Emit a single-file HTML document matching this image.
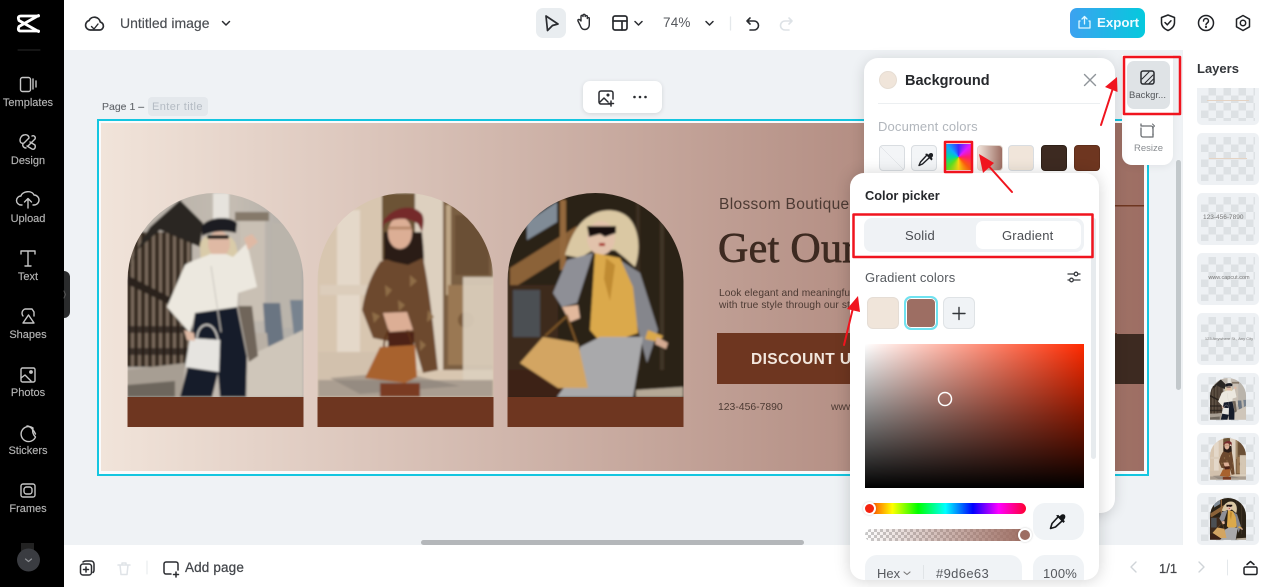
<!DOCTYPE html>
<html lang="en"><head><meta charset="utf-8"><title>Untitled image</title>
<style>
*{box-sizing:border-box}
html,body{margin:0;padding:0;width:1269px;height:587px;overflow:hidden;background:#eff2f5;font-family:"Liberation Sans",sans-serif;color:#3c3f44}
.a{position:absolute}
.t{position:absolute;white-space:nowrap;line-height:1}
svg{position:absolute;left:0;top:0;overflow:visible}
.side{position:absolute;width:56px;left:0;text-align:center;color:#b4b4b4;font-size:11px;line-height:1;-webkit-text-stroke:.15px #b4b4b4}
.sw{position:absolute;top:145px;width:26px;height:26px;border-radius:4px;border:1px solid #d9dde1}
.th{position:absolute;left:1197px;width:62px;height:52px;border-radius:5px;background-color:#eef1f4;overflow:hidden}
.ck{position:absolute;left:4px;top:4px;right:4px;bottom:4px;background:repeating-conic-gradient(#dde1e4 0 25%,#eef1f4 0 50%) 0 0/15px 15px}
.tt{position:absolute;left:5px;right:3px;text-align:center;color:#777;white-space:nowrap;line-height:1}
</style></head><body>

<!-- canvas -->
<svg width="1269" height="587" viewBox="0 0 1269 587">
<defs>
<linearGradient id="bg" x1="0" x2="1" y1="0" y2="0"><stop offset="0" stop-color="#f1e4da"/><stop offset="1" stop-color="#9d6e63"/></linearGradient>
<linearGradient id="st1" x1="0" x2="1" y1="0" y2="0"><stop offset="0" stop-color="#b5aea6"/><stop offset=".6" stop-color="#c4bcb2"/><stop offset="1" stop-color="#aeaba6"/></linearGradient>
<clipPath id="c1"><path d="M127.500 397V281a88 88 0 0 1 176 0V397Z"/></clipPath>
<clipPath id="c2"><path d="M317.500 397V281a88 88 0 0 1 176 0V397Z"/></clipPath>
<clipPath id="c3"><path d="M507.500 397V281a88 88 0 0 1 176 0V397Z"/></clipPath>
<pattern id="fence" width="7" height="200" patternUnits="userSpaceOnUse"><rect width="7" height="200" fill="#7a6c5d"/><rect x="1" width="4" height="200" fill="#33271d"/></pattern>
<filter id="b" x="-5%" y="-5%" width="110%" height="110%"><feGaussianBlur stdDeviation="1"/></filter>
<g id="p1"><g clip-path="url(#c1)"><g filter="url(#b)">
<rect x="127" y="190" width="178" height="210" fill="url(#st1)"/>
<rect x="213" y="193" width="16" height="36" fill="#e6e3dd"/>
<rect x="235" y="212" width="34" height="9" fill="#85796a"/>
<rect x="240" y="221" width="25" height="100" fill="#c9c0b4"/>
<rect x="272" y="223" width="30" height="105" fill="#bab4ab"/>
<path d="M263 303h17l5 52-18 4z" fill="#6a7482"/><path d="M290 300h13v36h-9z" fill="#78838f"/>
<path d="M247 333h20l3 34h-23z" fill="#b9b0a5"/>
<rect x="127" y="232" width="65" height="135" fill="url(#fence)"/>
<path d="M127 280C133 255 142 240 150 227L180 200 203 223 200 247 160 230 135 252 127 282z" fill="#2b2622"/>
<path d="M127 275l66 34v7l-66-32z" fill="#2a241f"/>
<path d="M127 326h65v7h-65zM127 348h62v7h-62z" fill="#2a241f" opacity=".8"/>
<path d="M127 370L185 363 182 397H127Z" fill="#a79e93"/>
<path d="M127 385l48-4v16h-48z" fill="#6d665d"/>
<path d="M247 357L303 330V397H247Z" fill="#cfc6ba"/>
<path d="M238 306h14l6 50-9 6z" fill="#6f655a"/>
<path d="M200 245c2-14 32-16 36 0 3 12 4 22 1 32h-10l-8-18h-12l-6 6z" fill="#d9cba9"/>
<ellipse cx="219" cy="244" rx="11" ry="13" fill="#dfb9a4"/>
<path d="M202 226c5-9 28-11 35-3l-1 10c-10-3-24-2-34 3z" fill="#1b1c22"/>
<rect x="207" y="235" width="22" height="4" rx="2" fill="#111"/>
<path d="M185 265C195 259 205 257 210 254H226L233 257 247 243 257 287 238 293 237 307 195 313 190 333 167 307Z" fill="#ece8df"/>
<path d="M244 238l8-4 6 8-10 8z" fill="#dfb9a4"/>
<path d="M195 313L237 307 247 357 246 397H220L218 373 212 397H180L187 370 193 327Z" fill="#181b29"/>
<path d="M197 338c1-16 17-20 21 2" fill="none" stroke="#d9d6d0" stroke-width="1.500"/>
<path d="M190 338L220 340 219 372 185 367Z" fill="#e6e4e0"/>
<path d="M184 330l10 3 1 8-8-1z" fill="#dfb9a4"/>
<path d="M211 266l10 66" stroke="#c9c5be" stroke-width="1" fill="none"/>
</g></g></g>
<g id="p2"><g clip-path="url(#c2)"><g filter="url(#b)">
<rect x="317" y="190" width="178" height="210" fill="#d8c6b0"/>
<rect x="337" y="210" width="23" height="147" fill="#e4d8c9"/>
<rect x="320" y="285" width="60" height="10" fill="#dccdbb"/>
<path d="M318 352h70v28h-70z" fill="#d2c1ad"/>
<rect x="382" y="193" width="33" height="67" fill="#6c5236"/>
<rect x="415" y="193" width="28" height="177" fill="#ddd0bf"/>
<rect x="443" y="200" width="50" height="170" fill="#7a5e42"/>
<rect x="446" y="205" width="5" height="90" fill="#bda685"/>
<rect x="455" y="215" width="34" height="60" fill="#6b5035"/>
<rect x="448" y="285" width="45" height="80" fill="#9a7853"/>
<circle cx="466" cy="320" r="8" fill="#7a5a3a"/>
<path d="M463 277h30v113h-30z" fill="#dccfbf" opacity=".9"/>
<path d="M318 380h175v17H318z" fill="#aa9e91"/>
<path d="M330 378l70-6 60 14-100 8z" fill="#7f7872" opacity=".5"/>
<path d="M384 232c-1 12 2 24-2 38l41 2c2-14 0-28-1-40z" fill="#2c1d18"/>
<ellipse cx="400" cy="233" rx="12" ry="16" fill="#dcae95"/>
<path d="M382 224c4-13 28-24 40-10 3 6 1 12 0 18l-4-8c-10-7-22-7-34 0l-1 6z" fill="#752b2c"/>
<path d="M388 228h23" stroke="#a87a5c" stroke-width="3" opacity=".7"/>
<path d="M380 262c6-4 8-2 14 0l14 3 15-7C430 290 434 335 438 370L423 373 414 342H392L373 338 362 310C365 290 372 274 380 262Z" fill="#6d4a2e"/>
<path d="M385 285l7 5-6 7zM410 275l7 6-7 6zM428 310l6 7-7 5zM372 312l8 4-6 7zM398 300l7 5-6 6zM420 340l6 5-6 6z" fill="#8f6d46"/>
<path d="M383 313l24-1 6 18-24 2z" fill="#dcae95"/>
<path d="M388 332h26v16h-26z" fill="#4e2018"/>
<path d="M365 378L380 347 415 345 417 377 405 383Z" fill="#a8622f"/>
<path d="M384 347c0-8 2-12 5-17M412 345c-1-6-3-10-5-15" stroke="#5c3016" stroke-width="1.800" fill="none"/>
<path d="M380 383h40v14h-40z" fill="#7a3a20"/>
</g></g></g>
<g id="p3"><g clip-path="url(#c3)"><g filter="url(#b)">
<rect x="507" y="190" width="178" height="210" fill="#2a2118"/>
<path d="M510 268L577 226V248L510 290Z" fill="#8b6238"/>
<path d="M527 222l30-20v20l-30 18z" fill="#808b96"/>
<rect x="560" y="200" width="6" height="70" fill="#94693e"/>
<path d="M508 285h50v85h-50z" fill="#3c2b1c"/>
<path d="M513 290h27v47h-27z" fill="#4b4f53"/>
<path d="M508 370h60v27h-60z" fill="#3e2214"/>
<path d="M636 200h4v170h-4z" fill="#3b2f22"/><path d="M660 205h4v165h-4z" fill="#413527"/>
<path d="M636 390l47-3v10h-47z" fill="#b5a996"/>
<path d="M565 255C570 238 578 222 590 216 605 206 625 210 632 222 640 235 640 252 635 267L625 258 615 250H593L580 258Z" fill="#dac8a3"/>
<ellipse cx="601" cy="238" rx="14" ry="17" fill="#e2c2ab"/>
<path d="M587 226h29v7l-11 4-5-3-11 3z" fill="#15110f"/>
<path d="M599 243h6v3h-6z" fill="#a8201c"/>
<path d="M553 293L567 260 593 253 577 303 562 307Z" fill="#8e8f96"/>
<path d="M620 260L640 273 658 330 647 363 633 310Z" fill="#85868c"/>
<path d="M595 253L620 258 633 287 638 333 603 345 590 330Z" fill="#dba94c"/>
<path d="M606 258l9 7-5 36-6-22z" fill="#c08b32"/>
<path d="M580 347L600 337 643 337 633 397H557L577 370Z" fill="#a9a9ab"/>
<path d="M648 330l15 6-4 6-14-3z" fill="#dba94c"/>
<path d="M657 337l11 6-2 6-11-5z" fill="#d5ab92"/>
<path d="M562 307l16-2 2 13-10 4z" fill="#e2b89c"/>
<path d="M520 363L543 337 578 343 588 388H558Z" fill="#d3a562"/>
<path d="M545 336l22-20 10 28" stroke="#7d5526" stroke-width="2" fill="none"/>
</g></g></g>
</defs>
<rect x="98" y="120" width="1050" height="355" fill="#fafbfc" stroke="#14c6e0" stroke-width="2"/>
<rect x="101" y="123" width="1043" height="348" fill="url(#bg)"/>
<rect x="1100" y="205" width="44" height="1.500" fill="#6e3620"/>
<use href="#p1"/><use href="#p2"/><use href="#p3"/>
<rect x="127.500" y="397" width="176" height="30" fill="#6e3620"/>
<rect x="317.500" y="397" width="176" height="30" fill="#6e3620"/>
<rect x="507.500" y="397" width="176" height="30" fill="#6e3620"/>
<rect x="717" y="333" width="400" height="51" fill="#6e3620"/>
<rect x="1095" y="334" width="49" height="50" fill="#3d2a21"/>
</svg>
<div class="t" style="left:719px;top:197px;font-size:15.500px;color:#4c3a33;letter-spacing:.35px">Blossom Boutique</div>
<div class="t" style="left:718px;top:228px;font-size:42px;font-family:'Liberation Serif',serif;color:#3d2a21;-webkit-text-stroke:.7px #3d2a21;letter-spacing:.3px">Get Our</div>
<div class="t" style="left:719px;top:289px;font-size:10.200px;color:#4c3a33;letter-spacing:.1px">Look elegant and meaningful</div>
<div class="t" style="left:719px;top:301px;font-size:10.200px;color:#4c3a33;letter-spacing:.1px">with true style through our st</div>
<div class="t" style="left:751px;top:352px;font-size:15.500px;font-weight:700;color:#f3e7dd;letter-spacing:.4px">DISCOUNT U</div>
<div class="t" style="left:718px;top:403px;font-size:10.400px;color:#4c3a33">123-456-7890</div>
<div class="t" style="left:831px;top:403px;font-size:10.400px;color:#4c3a33">www</div>

<!-- header -->
<div class="a" style="left:64px;top:0;width:1205px;height:50px;background:#fff"></div>
<div class="t" style="left:120px;top:16px;font-size:14px;color:#4a4d52;-webkit-text-stroke:.15px #4a4d52">Untitled image</div>
<div class="t" style="left:663px;top:16px;font-size:13.500px;color:#55585d;letter-spacing:.2px">74%</div>
<div class="a" style="left:536px;top:8px;width:30px;height:30px;border-radius:7px;background:#e9edf0"></div>
<div class="a" style="left:1070px;top:8px;width:75px;height:30px;border-radius:7px;background:linear-gradient(90deg,#3ca2f0,#05c9dd)"></div>
<div class="t" style="left:1097px;top:16px;font-size:13.300px;font-weight:700;color:#eefbff">Export</div>

<!-- floating toolbar -->
<div class="a" style="left:583px;top:81px;width:79px;height:32px;border-radius:7px;background:#fff;box-shadow:0 1px 5px rgba(0,0,0,.12)"></div>
<div class="t" style="left:102px;top:102px;font-size:10.500px;color:#62666b;-webkit-text-stroke:.1px #62666b">Page 1 –</div>
<div class="a" style="left:148px;top:97px;width:60px;height:19px;border-radius:4px;background:#e4e8ec"></div>
<div class="t" style="left:152px;top:102px;font-size:11px;color:#b4bbc3;letter-spacing:.4px">Enter title</div>

<!-- sidebar -->
<div class="a" style="left:0;top:0;width:64px;height:587px;background:#000"></div>
<div class="a" style="left:64px;top:271px;width:6px;height:47px;background:#2a2b2c;border-radius:0 6px 6px 0"></div>
<div class="side" style="top:98px">Templates</div>
<div class="side" style="top:156px">Design</div>
<div class="side" style="top:214px">Upload</div>
<div class="side" style="top:272px">Text</div>
<div class="side" style="top:330px">Shapes</div>
<div class="side" style="top:388px">Photos</div>
<div class="side" style="top:446px">Stickers</div>
<div class="side" style="top:504px">Frames</div>

<!-- bottom bar -->
<div class="a" style="left:64px;top:545px;width:1205px;height:42px;background:#fff"></div>
<div class="a" style="left:421px;top:540px;width:383px;height:5px;border-radius:3px;background:#b4b7ba"></div>
<div class="t" style="left:185px;top:561px;font-size:13.500px;color:#43464b;letter-spacing:.15px;-webkit-text-stroke:.25px #43464b">Add page</div>
<div class="t" style="left:1159px;top:562px;font-size:13px;color:#44474b;-webkit-text-stroke:.25px #44474b">1/1</div>

<!-- layers -->
<div class="a" style="left:1176px;top:160px;width:5px;height:230px;border-radius:3px;background:#c2c8cb"></div>
<div class="a" style="left:1182px;top:50px;width:87px;height:495px;background:#fff;border-left:1px solid #eef1f3"></div>
<div class="t" style="left:1197px;top:62px;font-size:13px;font-weight:700;color:#33363a">Layers</div>
<div class="th" style="top:88px;height:37px;border-radius:0 0 5px 5px"><div class="ck" style="top:0"></div><div class="a" style="left:10px;top:12px;width:42px;height:1px;background:#e4d3c4"></div></div>
<div class="th" style="top:133px"><div class="ck"></div><div class="a" style="left:12px;top:25px;width:38px;height:1px;background:#e4d3c4"></div></div>
<div class="th" style="top:193px"><div class="ck"></div><div class="tt" style="top:22px;font-size:6.500px;text-align:left;left:6px">123-456-7890</div></div>
<div class="th" style="top:253px"><div class="ck"></div><div class="tt" style="top:23px;font-size:5.500px">www.capcut.com</div></div>
<div class="th" style="top:313px"><div class="ck"></div><div class="tt" style="top:24px;font-size:4px">123 Anywhere St., Any City</div></div>
<div class="th" style="top:373px"><div class="ck"></div></div>
<div class="th" style="top:433px"><div class="ck"></div></div>
<div class="th" style="top:493px"><div class="ck"></div></div>
<svg width="1269" height="587" viewBox="0 0 1269 587">
<use href="#p1" transform="translate(1210 378) scale(.205) translate(-127.500 -193)"/>
<use href="#p2" transform="translate(1210 438) scale(.205) translate(-317.500 -193)"/>
<use href="#p3" transform="translate(1210 498) scale(.205) translate(-507.500 -193)"/>
</svg>

<!-- right tools -->
<div class="a" style="left:1122px;top:55px;width:51px;height:110px;border-radius:0 0 10px 10px;background:#fff;box-shadow:0 2px 8px rgba(0,0,0,.06)"></div>
<div class="a" style="left:1127px;top:61px;width:43px;height:48px;border-radius:7px;background:#dfe3e6"></div>
<div class="t" style="left:1129px;top:91px;font-size:9.500px;color:#55585c">Backgr...</div>
<div class="t" style="left:1134px;top:144px;font-size:9.500px;color:#888c90">Resize</div>

<!-- background panel -->
<div class="a" style="left:864px;top:58px;width:251px;height:455px;border-radius:14px;background:#fff;box-shadow:0 2px 14px rgba(0,0,0,.14)"></div>
<div class="a" style="left:879px;top:71px;width:18px;height:18px;border-radius:50%;background:#f0e5da;border:1px solid #e6ddd3"></div>
<div class="t" style="left:905px;top:74px;font-size:14.500px;font-weight:700;color:#26282c">Background</div>
<div class="a" style="left:878px;top:103px;width:222px;height:1px;background:#eceff1"></div>
<div class="t" style="left:878px;top:120px;font-size:13px;color:#b1b6bc;letter-spacing:.15px">Document colors</div>
<div class="sw" style="left:879px;background:linear-gradient(45deg,#f3f5f7 49%,#d4d8dc 49%,#d4d8dc 51%,#f3f5f7 51%)"></div>
<div class="sw" style="left:911px;background:#f3f5f7"></div>
<div class="a" style="left:946px;top:144px;width:25px;height:26px;background:conic-gradient(from 0deg,#3c28ff,#e01aff,#ff1d6c,#ff5a10,#ffd910,#5ce020,#00d8a0,#10a8ff,#3c28ff)"></div>
<div class="sw" style="left:977px;background:linear-gradient(90deg,#f1e4da,#9d6e63);border-color:#e3d8d0"></div>
<div class="sw" style="left:1008px;background:#f0e5da"></div>
<div class="sw" style="left:1041px;background:#3d2a21;border-color:#2e2018"></div>
<div class="sw" style="left:1074px;background:#6e3620;border-color:#5f2e1b"></div>

<!-- color picker -->
<div class="a" style="left:850px;top:173px;width:249px;height:407px;border-radius:14px;background:#fff;box-shadow:0 1px 16px rgba(0,0,0,.18);overflow:hidden">
  <div class="a" style="left:241px;top:45px;width:5px;height:241px;border-radius:3px;background:#e7ebee"></div>
  <div class="t" style="left:15px;top:17px;font-size:12.800px;font-weight:700;color:#26282c">Color picker</div>
  <div class="a" style="left:14px;top:45px;width:220px;height:34px;border-radius:8px;background:#eff2f5"></div>
  <div class="a" style="left:126px;top:48px;width:105px;height:28px;border-radius:7px;background:#fff"></div>
  <div class="t" style="left:55px;top:56px;font-size:13px;color:#4a4d52;letter-spacing:.2px">Solid</div>
  <div class="t" style="left:152px;top:56px;font-size:13px;color:#4a4d52;letter-spacing:.2px">Gradient</div>
  <div class="t" style="left:15px;top:98px;font-size:13px;color:#565a5f;letter-spacing:.15px">Gradient colors</div>
  <div class="a" style="left:17px;top:124px;width:32px;height:32px;border-radius:6px;background:#f0e5da;border:1px solid #e5ddd5"></div>
  <div class="a" style="left:54px;top:123px;width:34px;height:34px;border-radius:7px;background:#9d6e63;border:2px solid #6fe2f0;box-shadow:inset 0 0 0 1px #fff"></div>
  <div class="a" style="left:93px;top:124px;width:32px;height:32px;border-radius:6px;background:#f0f3f6;border:1px solid #dfe3e6"></div>
  <div class="a" style="left:15px;top:171px;width:219px;height:144px;background:linear-gradient(to top,#000,rgba(0,0,0,0)),linear-gradient(to right,#fff,#ff2a00)"></div>
  <div class="a" style="left:15px;top:330px;width:161px;height:11px;border-radius:6px;background:linear-gradient(90deg,#ff1500,#ff0 17%,#0f0 33%,#0ff 50%,#00f 67%,#f0f 83%,#ff0030)"></div>
  <div class="a" style="left:15px;top:331px;width:9px;height:9px;border-radius:50%;background:#f5230f;box-shadow:0 0 0 2px #fff,0 0 2px 2px rgba(0,0,0,.2)"></div>
  <div class="a" style="left:15px;top:356px;width:161px;height:12px;border-radius:6px;background:repeating-conic-gradient(#c9c9c9 0 25%,#fff 0 50%) 0 0/6px 6px"></div>
  <div class="a" style="left:15px;top:356px;width:161px;height:12px;border-radius:6px;background:linear-gradient(90deg,rgba(157,110,99,0),#9d6e63)"></div>
  <div class="a" style="left:170px;top:357px;width:10px;height:10px;border-radius:50%;background:#9d6e63;box-shadow:0 0 0 2px #fff,0 0 2px 2px rgba(0,0,0,.2)"></div>
  <div class="a" style="left:183px;top:330px;width:51px;height:37px;border-radius:12px;background:#f0f3f6"></div>
  <div class="a" style="left:15px;top:382px;width:157px;height:40px;border-radius:12px;background:#f0f3f6"></div>
  <div class="a" style="left:183px;top:382px;width:51px;height:40px;border-radius:12px;background:#f0f3f6"></div>
  <div class="t" style="left:27px;top:394px;font-size:13px;color:#55585d">Hex</div>
  <div class="a" style="left:73px;top:392px;width:1px;height:14px;background:#e0e4e7"></div>
  <div class="t" style="left:86px;top:394px;font-size:13px;color:#55585d;letter-spacing:.35px">#9d6e63</div>
  <div class="t" style="left:193px;top:394px;font-size:13px;color:#55585d;letter-spacing:.2px">100%</div>
</div>

<!-- icons & annotations -->
<svg width="1269" height="587" viewBox="0 0 1269 587" fill="none" stroke-linecap="round" stroke-linejoin="round">
<!-- logo -->
<g stroke="#fff" stroke-width="2.800"><path d="M38.500 15.500L19 26.500Q17 31 21 31H38.500"/><path d="M38.500 31.500L19 20.500Q17 16 21 16H38.500"/></g>
<path d="M18 50h22" stroke="#2a2a2a"/>
<!-- sidebar icons -->
<g stroke="#c6c6c6" stroke-width="1.400">
<rect x="20.500" y="77.500" width="10" height="14" rx="2"/><path d="M33 79v10M36 81v6"/>
<path d="M24 135c3-1 5 1 5 3l-5 5c-3 1-4-1-4-3s2-5 4-5zM32 136c2-1 4 1 3 3l-7 7M26 148c-2 0-4-2-3-4M30 142l5 3c1 3-1 5-3 4l-5-3"/>
<path d="M22 205h-1a4.500 4.500 0 0 1 0-9c1-5 11-6 13-1a5 5 0 0 1 0 10h-1M28 208v-9M24.500 202l3.500-3.500 3.500 3.500"/>
<path d="M21 254v-3h14v3M28 251v15M25 266h6"/>
<path d="M23 316a4.500 4.500 0 0 1 2-7h7l2 3v4"/><path d="M23 323h11l-5.500-8z"/>
<rect x="21" y="368" width="14" height="14" rx="1.500"/><path d="M21 378l4-3 6 6"/><circle cx="31" cy="372" r="1.200" fill="#c6c6c6"/>
<path d="M33 428a7.500 7.500 0 1 0 2.500 9 9 9 0 0 1-2.500-9z"/><path d="M27 426c3 0 6 3 8.500 8"/>
<rect x="21" y="484" width="14" height="13" rx="2"/><rect x="24" y="487" width="8" height="7" rx="2.500"/>
</g>
<rect x="21" y="543" width="13" height="8" fill="#222"/>
<circle cx="28.500" cy="560" r="11.500" fill="#3a3c41"/>
<path d="M25.500 559l3 2.500 3-2.500" stroke="#8f9296" stroke-width="1.200"/>
<!-- handle -->
<path d="M64 291l1.500 3.500-1.500 3.500" stroke="#555"/>
<!-- header icons -->
<g stroke="#2a2c30" stroke-width="1.700">
<path d="M90.500 30h9a4 4 0 0 0 .8-7.900 6 6 0 0 0-11.300-1.500 4.800 4.800 0 0 0 1.500 9.400z"/><path d="M91.500 26.500l2.500 2.500 4-5" stroke-width="1.400"/>
<path d="M222.500 21.500l3.500 3.500 3.500-3.500" stroke-width="1.500"/>
<path d="M546 16l12 8-5.500 1.500-5 5z" stroke-width="1.700"/>
<path d="M580 25l-2-4c-.5-1.500 1-2 2-1l1 1v-4.500c0-1.500 2-1.500 2 0v-1c0-1.500 2.200-1.500 2.200 0v1c0-1.300 2.100-1.300 2.100 0v2c0-1.200 2-1.200 2 0v6c0 3-2 5-4.500 5-2.300 0-3.500-1-4.800-4.500z" stroke-width="1.400"/>
<rect x="613" y="16" width="14" height="14" rx="2"/><path d="M613 21h14M622 21v9"/>
<path d="M635 21.500l3.500 3.500 3.500-3.500" stroke-width="1.500"/>
<path d="M706 21.500l3.500 3.500 3.500-3.500" stroke-width="1.500"/>
<path d="M750 18l-3 3 3 3M747 21h7a4.500 4.500 0 0 1 0 9h-4" stroke-width="1.600"/>
</g>
<path d="M730.500 17v13" stroke="#e4e8eb" stroke-width="1.300"/>
<path d="M789 18l3 3-3 3M792 21h-7a4.500 4.500 0 0 0 0 9h4" stroke="#dde2e6" stroke-width="1.600"/>
<!-- export icon -->
<g stroke="#dff7ff" stroke-width="1.300"><path d="M1080 21h-1v7h11v-7h-1M1084.500 24v-7M1082 19l2.500-2.500 2.500 2.500"/></g>
<g stroke="#202226" stroke-width="1.500">
<path d="M1168 15l6.500 2.500v5c0 4-3 6.500-6.500 8-3.500-1.500-6.500-4-6.500-8v-5z"/><path d="M1165 22.500l2.300 2.300 3.700-4"/>
<circle cx="1206" cy="23" r="7.500"/><path d="M1203.500 21c0-3.300 5-3.300 5 0 0 2-2.500 2-2.500 3.800"/><circle cx="1206" cy="27" r=".4" fill="#202226"/>
<path d="M1243 15.500l6.500 3.700v7.600l-6.500 3.700-6.500-3.700v-7.600z"/><circle cx="1243" cy="23" r="2.700"/>
</g>
<!-- float toolbar -->
<g stroke="#2a2c30" stroke-width="1.500">
<path d="M611 104h-10a2 2 0 0 1-2-2v-9a2 2 0 0 1 2-2h10a2 2 0 0 1 2 2v6"/><path d="M600 102l4-4 4 4"/><circle cx="608" cy="95" r=".8" fill="#2a2c30"/><path d="M611 101v5M608.500 103.500h5"/>
</g>
<g fill="#2a2c30"><circle cx="634.500" cy="97" r="1.300"/><circle cx="640" cy="97" r="1.300"/><circle cx="645.500" cy="97" r="1.300"/></g>
<!-- bottom bar icons -->
<g stroke="#2a2c30" stroke-width="1.500">
<rect x="80.500" y="564" width="11" height="11" rx="2.500"/><path d="M83 562c1-.8 2-1 3-1h5a3 3 0 0 1 3 3v6c0 1-.3 2-1 2.500"/><path d="M86 567v5M83.500 569.500h5"/>
<path d="M171 574h-5a2 2 0 0 1-2-2v-8a2 2 0 0 1 2-2h10a2 2 0 0 1 2 2v6"/><path d="M176 572v5M173.500 574.500h5"/>
</g>
<g stroke="#dfe3e7" stroke-width="1.500"><path d="M118 565h12M120 565l1 9.500h6l1-9.500M122 565v-2h4v2"/></g>
<path d="M147 561v13" stroke="#e4e8eb"/>
<path d="M1136 562l-5 5 5 5" stroke="#cfd4d8" stroke-width="1.400"/>
<path d="M1199 562l5 5-5 5" stroke="#cfd4d8" stroke-width="1.400"/>
<path d="M1227.500 560v15" stroke="#e4e8eb"/>
<g stroke="#202226" stroke-width="1.500"><rect x="1244" y="567" width="13" height="7.500" rx="1.500"/><path d="M1247 564.500l3.500-3 3.500 3"/></g>
<!-- tool panel icons -->
<g stroke="#2a2c30" stroke-width="1.500"><rect x="1141" y="71" width="13" height="13" rx="2"/><path d="M1142 79l7-7M1145 83l8-8M1149 83.500l4.500-4.500" stroke-width="1"/></g>
<g stroke="#6a6e72" stroke-width="1.300"><path d="M1143 126h8a2 2 0 0 1 2 2v7M1141 128v7a2 2 0 0 0 2 2h7"/><path d="M1141 124v2h2M1153 134v3h-3"/><path d="M1152.500 124l2 2-2 2" stroke-width="1"/></g>
<!-- panel close -->
<path d="M1084.500 74.500l11 11M1095.500 74.500l-11 11" stroke="#8f9499" stroke-width="1.400"/>
<!-- eyedropper small -->
<g stroke="#1e2024" stroke-width="1.400"><path d="M926.500 155.500l-6 6.500-1.500 3.500 3.500-1.500 6.500-6"/></g>
<path d="M925 154l6.500 6.500 1.200-1.500-1-1.200c2.500-2.300 1.300-5.300-1-4.800-1 .2-1.700 1-2.400 1.700l-1.200-1.200z" fill="#1e2024"/>
<!-- sliders icon -->
<g stroke="#3a3d42" stroke-width="1.300"><path d="M1068 274h12M1068 280h12"/><circle cx="1076" cy="274" r="1.800" fill="#fff"/><circle cx="1071.500" cy="280" r="1.800" fill="#fff"/></g>
<!-- plus -->
<path d="M959 307.500v12M953 313.500h12" stroke="#33363a" stroke-width="1.400"/>
<!-- picker handle -->
<circle cx="945" cy="399" r="6.500" stroke="#fff" stroke-width="1.500"/>
<!-- big eyedropper -->
<g stroke="#15171a" stroke-width="1.600"><path d="M1058 517l-6 6.500-1.500 5 5-1.500 6.500-6"/></g>
<path d="M1056 515.500l7.500 7.500 1.400-1.700-1.200-1.300c3-2.800 1.500-6.300-1.200-5.700-1.200.2-2 1.200-2.800 2l-1.400-1.400z" fill="#15171a"/>
<!-- hex chevron -->
<path d="M904 572l3 2.500 3-2.500" stroke="#777" stroke-width="1.100"/>
<!-- red highlights -->
<g stroke="#f0141e" stroke-width="2.500"><rect x="1124" y="57" width="56" height="57"/><rect x="945" y="142" width="27" height="30"/><rect x="853.500" y="214.500" width="239" height="42.500"/></g>
<!-- arrows -->
<g stroke="#f0141e" stroke-width="2"><path d="M1101 125L1113 88"/><path d="M1012 192L986 163"/><path d="M844 345L853 308"/></g>
<g fill="#f0141e"><path d="M1117 77L1117.500 92 1105 87Z"/><path d="M979 154L994 163 983 173Z"/><path d="M858 296L860 312 847 309Z"/></g>
</svg>
</body></html>
